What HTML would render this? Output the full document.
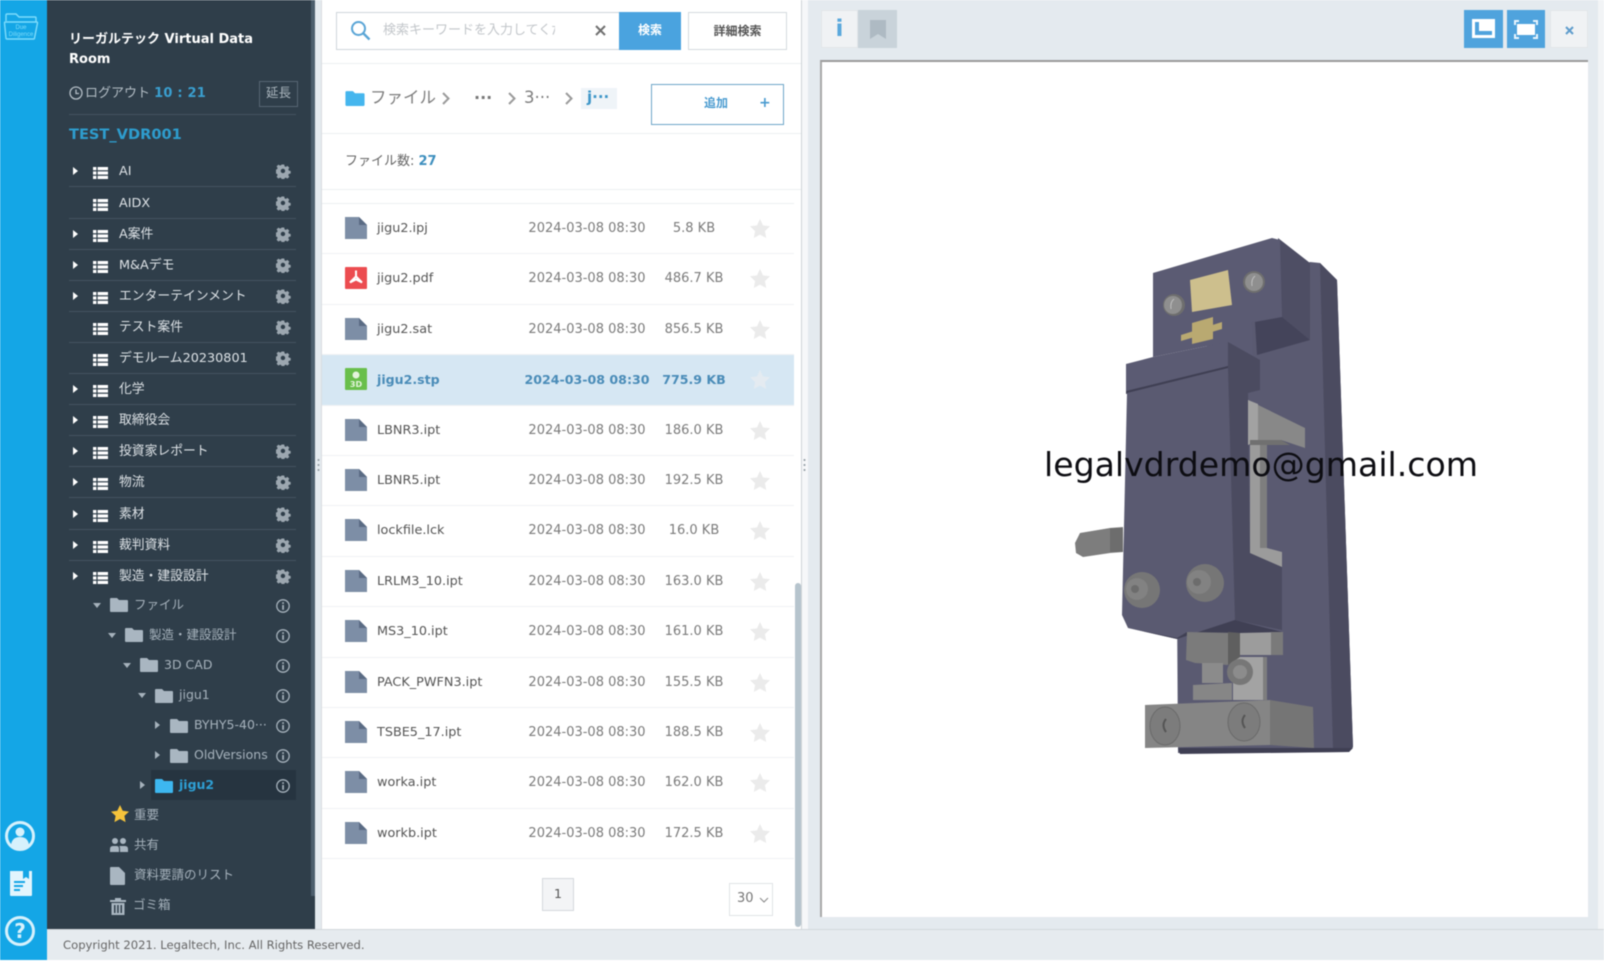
<!DOCTYPE html>
<html lang="ja"><head><meta charset="utf-8"><title>VDR</title>
<style>
*{box-sizing:border-box}
html,body{margin:0;padding:0;width:1604px;height:965px;overflow:hidden;background:#fff}
body{font-family:"DejaVu Sans","Noto Sans CJK JP",sans-serif;font-size:13px;position:relative;color:#555;filter:blur(.4px)}
.a{position:absolute}
#rail{left:0;top:0;width:47px;height:960px;background:#14a6e6}
#side{left:47px;top:0;width:268px;height:929px;background:#2f3e4a}
#sb{left:311px;top:0;width:4px;height:896px;background:#4c5e6d}
#foot{left:47px;top:929px;width:1557px;height:31px;background:#e6ebef;border-top:1px solid #d3d8dc;color:#666;font-size:11.6px;line-height:30px;padding-left:16px}
#mid{left:321px;top:0;width:481px;height:929px;background:#fff;border-left:1px solid #d9dde0;border-right:1px solid #cfd4d8}
#split1{left:315px;top:0;width:6px;height:929px;background:#e4eaef}
#split2{left:802px;top:0;width:6px;height:929px;background:#f6f7f9}
#right{left:808px;top:0;width:790px;height:929px;background:#e4eaef}
#edge{left:1598px;top:0;width:6px;height:929px;background:#f2f4f6}
.r{position:absolute;left:69px;width:227px;height:31.1px;border-bottom:1px solid #435360;color:#dde2e6;line-height:29px;font-size:12.8px;white-space:nowrap}
.r.n{border-bottom:0}
.r span{position:absolute;left:50px;top:1px}
.r .ar{position:absolute;left:4px;top:11px;width:0;height:0;border-left:5px solid #fff;border-top:4.5px solid transparent;border-bottom:4.5px solid transparent}
.r svg{position:absolute}
.r svg.l{left:24px;top:11px}
.r svg.g{left:207px;top:8px}
.t{position:absolute;height:30px;line-height:28px;color:#a6b2bc;font-size:12.5px;white-space:nowrap}
.da{position:absolute;width:0;height:0;border-top:5px solid #a6b2bc;border-left:4.5px solid transparent;border-right:4.5px solid transparent}
.ra{position:absolute;width:0;height:0;border-left:5px solid #a6b2bc;border-top:4.5px solid transparent;border-bottom:4.5px solid transparent}
.f{position:absolute;left:1px;width:472px;height:50.4px;border-bottom:1px solid #f0f2f4;line-height:49px;color:#555;font-size:13px}
.f .n{position:absolute;left:55px;color:#555;font-size:12.8px}
.f .d{position:absolute;left:200px;width:130px;text-align:center;color:#7b7b7b;white-space:nowrap}
.f .s{position:absolute;left:327px;width:90px;text-align:center;color:#7b7b7b;white-space:nowrap}
.f svg{position:absolute}
.f svg.i{left:23px;top:13px}
.f svg.st{left:428px;top:15px}
.f.sel{background:#d6e7f3}
.f.sel .n,.f.sel .d,.f.sel .s{color:#4a8cb8;font-weight:bold;font-size:12.6px}
.h{position:absolute;height:1px;background:#eceff1}
</style></head><body>
<svg width="0" height="0" style="position:absolute"><defs>
<g id="list" fill="#fff"><rect x="0" y="0" width="3.4" height="3.2"/><rect x="4.6" y="0" width="10.4" height="3.2"/><rect x="0" y="4.4" width="3.4" height="3.2"/><rect x="4.6" y="4.4" width="10.4" height="3.2"/><rect x="0" y="8.8" width="3.4" height="3.2"/><rect x="4.6" y="8.8" width="10.4" height="3.2"/></g>
<path id="gear" fill="#9ca7b0" fill-rule="evenodd" d="M5.6 0h2.8l.4 2 1.4.6 1.7-1.1 2 2-1.1 1.7.6 1.4 2 .4v2.8l-2 .4-.6 1.400 1.100 1.700-2 2-1.700-1.100-1.400.6-.4 2H5.6l-.4-2-1.400-.6-1.700 1.100-2-2 1.100-1.700-.6-1.400-2-.4V5.6l2-.4.6-1.400L.1 2.100l2-2 1.700 1.100 1.400-.6zM7 4.600a2.400 2.400 0 1 0 0 4.800 2.400 2.400 0 0 0 0-4.800z" transform="translate(.5 .5) scale(.92)"/>
<path id="fold" d="M0 2q0-1 1-1h6l2 2h8q1 0 1 1v10q0 1-1 1H1q-1 0-1-1z"/>
<g id="info"><circle cx="7" cy="7" r="6.2" fill="none" stroke="#a6b2bc" stroke-width="1.3"/><rect x="6.2" y="6" width="1.7" height="4.8" fill="#a6b2bc"/><rect x="6.2" y="3.2" width="1.7" height="1.7" fill="#a6b2bc"/></g>
<g id="file"><path d="M0 0h14l8 8v14H0z"/><path d="M14 0l8 8h-8z" fill="#5a6b84"/></g>
<path id="star" d="M10 0l3 6.400 7 .9-5.100 4.800 1.300 6.900L10 15.600 3.800 19l1.300-6.900L0 7.300l7-.9z"/>
</defs></svg>

<div class="a" id="rail"></div>
<svg class="a" style="left:3px;top:12px" width="36" height="29" viewBox="0 0 36 29" fill="none" stroke="#7fdcfb" stroke-width="1.4"><path d="M3 9V3q0-1 1-1h9l3 3h16q1 0 1 1v4"/><path d="M1.500 11q0-1 1-1h31q1 0 1 1l-3 15q0 1-1 1H4q-1 0-1-1z"/><text x="18" y="17" font-size="6" fill="#7fdcfb" stroke="none" text-anchor="middle" font-family="Liberation Sans">Due</text><text x="18" y="24" font-size="6" fill="#7fdcfb" stroke="none" text-anchor="middle" font-family="Liberation Sans">Diligence</text></svg>
<svg class="a" style="left:4px;top:820px" width="32" height="32" viewBox="0 0 32 32"><circle cx="16" cy="16" r="13.500" fill="none" stroke="#d6f1fc" stroke-width="3"/><circle cx="16" cy="12" r="4.500" fill="#d6f1fc"/><path d="M7 25q1-8 9-8t9 8q-4 4-9 4t-9-4z" fill="#d6f1fc"/></svg>
<svg class="a" style="left:9px;top:869px" width="24" height="28" viewBox="0 0 24 28"><path d="M1 2h13v8l3-2 3 2V2h3v24q0 1-1 1H2q-1 0-1-1z" fill="#e2f5fd"/><rect x="5" y="12" width="11" height="2" fill="#14a6e6"/><rect x="5" y="16" width="9" height="2" fill="#14a6e6"/><rect x="5" y="20" width="6" height="2" fill="#14a6e6"/></svg>
<svg class="a" style="left:4px;top:915px" width="32" height="32" viewBox="0 0 32 32"><circle cx="16" cy="16" r="13.500" fill="none" stroke="#d6f1fc" stroke-width="3"/><text x="16" y="23" font-size="20" font-weight="bold" fill="#d6f1fc" text-anchor="middle" font-family="DejaVu Sans">?</text></svg>

<div class="a" id="side"></div><div class="a" id="sb"></div>
<div class="a" style="left:69px;top:30px;width:230px;color:#fff;font-weight:bold;font-size:13px;line-height:20px">リーガルテック Virtual Data<br>Room</div>
<svg class="a" style="left:69px;top:86px" width="14" height="14" viewBox="0 0 14 14" fill="none" stroke="#b4bec6" stroke-width="1.300"><circle cx="7" cy="7" r="6"/><path d="M7 3.500V7.500H10"/></svg>
<div class="a" style="left:85px;top:85px;color:#b4bec6;font-size:13px;line-height:18px">ログアウト <b style="color:#3a9fd0;letter-spacing:.2px">10 : 21</b></div>
<div class="a" style="left:259px;top:81px;width:39px;height:26px;border:1px solid #566673;color:#aab5bd;font-size:12.500px;line-height:22px;text-align:center">延長</div>
<div class="a" style="left:69px;top:114px;width:227px;height:1px;background:#435360"></div>
<div class="a" style="left:69px;top:125px;color:#2e9dce;font-weight:bold;font-size:14.600px;line-height:20px">TEST_VDR001</div>

<div class="r" style="top:156.4px"><i class="ar"></i><svg class="l" width="15" height="12"><use href="#list"/></svg><span>AI</span><svg class="g" width="15" height="15"><use href="#gear"/></svg></div>
<div class="r" style="top:187.5px"><svg class="l" width="15" height="12"><use href="#list"/></svg><span>AIDX</span><svg class="g" width="15" height="15"><use href="#gear"/></svg></div>
<div class="r" style="top:218.6px"><i class="ar"></i><svg class="l" width="15" height="12"><use href="#list"/></svg><span>A案件</span><svg class="g" width="15" height="15"><use href="#gear"/></svg></div>
<div class="r" style="top:249.7px"><i class="ar"></i><svg class="l" width="15" height="12"><use href="#list"/></svg><span>M&amp;Aデモ</span><svg class="g" width="15" height="15"><use href="#gear"/></svg></div>
<div class="r" style="top:280.8px"><i class="ar"></i><svg class="l" width="15" height="12"><use href="#list"/></svg><span>エンターテインメント</span><svg class="g" width="15" height="15"><use href="#gear"/></svg></div>
<div class="r" style="top:311.9px"><svg class="l" width="15" height="12"><use href="#list"/></svg><span>テスト案件</span><svg class="g" width="15" height="15"><use href="#gear"/></svg></div>
<div class="r" style="top:343px"><svg class="l" width="15" height="12"><use href="#list"/></svg><span>デモルーム20230801</span><svg class="g" width="15" height="15"><use href="#gear"/></svg></div>
<div class="r" style="top:374.1px"><i class="ar"></i><svg class="l" width="15" height="12"><use href="#list"/></svg><span>化学</span></div>
<div class="r" style="top:405.2px"><i class="ar"></i><svg class="l" width="15" height="12"><use href="#list"/></svg><span>取締役会</span></div>
<div class="r" style="top:436.3px"><i class="ar"></i><svg class="l" width="15" height="12"><use href="#list"/></svg><span>投資家レポート</span><svg class="g" width="15" height="15"><use href="#gear"/></svg></div>
<div class="r" style="top:467.4px"><i class="ar"></i><svg class="l" width="15" height="12"><use href="#list"/></svg><span>物流</span><svg class="g" width="15" height="15"><use href="#gear"/></svg></div>
<div class="r" style="top:498.5px"><i class="ar"></i><svg class="l" width="15" height="12"><use href="#list"/></svg><span>素材</span><svg class="g" width="15" height="15"><use href="#gear"/></svg></div>
<div class="r" style="top:529.6px"><i class="ar"></i><svg class="l" width="15" height="12"><use href="#list"/></svg><span>裁判資料</span><svg class="g" width="15" height="15"><use href="#gear"/></svg></div>
<div class="r n" style="top:560.7px"><i class="ar"></i><svg class="l" width="15" height="12"><use href="#list"/></svg><span>製造・建設設計</span><svg class="g" width="15" height="15"><use href="#gear"/></svg></div>

<div class="a" style="left:151px;top:770px;width:145px;height:30px;background:#263440"></div>

<i class="da" style="left:93px;top:603px"></i><svg class="a" style="left:110px;top:597px" width="18" height="16"><use href="#fold" fill="#a9b6c1"/></svg><div class="t" style="left:134px;top:591px">ファイル</div>
<i class="da" style="left:108px;top:633px"></i><svg class="a" style="left:125px;top:627px" width="18" height="16"><use href="#fold" fill="#a9b6c1"/></svg><div class="t" style="left:149px;top:621px">製造・建設設計</div>
<i class="da" style="left:123px;top:663px"></i><svg class="a" style="left:140px;top:657px" width="18" height="16"><use href="#fold" fill="#a9b6c1"/></svg><div class="t" style="left:164px;top:651px">3D CAD</div>
<i class="da" style="left:138px;top:693px"></i><svg class="a" style="left:155px;top:688px" width="18" height="16"><use href="#fold" fill="#a9b6c1"/></svg><div class="t" style="left:179px;top:681px">jigu1</div>
<i class="ra" style="left:155px;top:721px"></i><svg class="a" style="left:170px;top:718px" width="18" height="16"><use href="#fold" fill="#a9b6c1"/></svg><div class="t" style="left:194px;top:711px">BYHY5-40···</div>
<i class="ra" style="left:155px;top:751px"></i><svg class="a" style="left:170px;top:748px" width="18" height="16"><use href="#fold" fill="#a9b6c1"/></svg><div class="t" style="left:194px;top:741px">OldVersions</div>
<i class="ra" style="left:140px;top:781px"></i><svg class="a" style="left:155px;top:778px" width="18" height="16"><use href="#fold" fill="#3db7f0"/></svg><div class="t" style="left:179px;top:771px;color:#2e9fd4;font-weight:bold">jigu2</div>
<svg class="a" style="left:276px;top:599px" width="14" height="14"><use href="#info"/></svg>
<svg class="a" style="left:276px;top:629px" width="14" height="14"><use href="#info"/></svg>
<svg class="a" style="left:276px;top:659px" width="14" height="14"><use href="#info"/></svg>
<svg class="a" style="left:276px;top:689px" width="14" height="14"><use href="#info"/></svg>
<svg class="a" style="left:276px;top:719px" width="14" height="14"><use href="#info"/></svg>
<svg class="a" style="left:276px;top:749px" width="14" height="14"><use href="#info"/></svg>
<svg class="a" style="left:276px;top:779px" width="14" height="14"><use href="#info"/></svg>

<svg class="a" style="left:111px;top:805px" width="18" height="18" viewBox="0 0 20 20"><use href="#star" fill="#f5c33b"/></svg><div class="t" style="left:134px;top:801px">重要</div>
<svg class="a" style="left:110px;top:837px" width="18" height="16" viewBox="0 0 18 16" fill="#a9b6c1"><circle cx="5" cy="4" r="3"/><circle cx="13" cy="4" r="3"/><path d="M0 15v-3q0-3 3-3h4q2 0 2 3v3zM10 15v-3q0-3-1-3h6q3 0 3 3v3z"/></svg><div class="t" style="left:134px;top:831px">共有</div>
<svg class="a" style="left:110px;top:867px" width="15" height="18" viewBox="0 0 15 18"><path d="M0 1q0-1 1-1h8l6 6v11q0 1-1 1H1q-1 0-1-1z" fill="#a9b6c1"/></svg><div class="t" style="left:134px;top:861px">資料要請のリスト</div>
<svg class="a" style="left:110px;top:898px" width="16" height="17" viewBox="0 0 16 17" fill="#a9b6c1"><path d="M0 2h5V0h6v2h5v2H0zM1.500 5h13v12h-13zM4 7v8h1.500V7zM7.200 7v8h1.500V7zM10.500 7v8H12V7z" fill-rule="evenodd"/></svg><div class="t" style="left:133px;top:891px">ゴミ箱</div>

<div class="a" id="split1"></div>
<div class="a" id="mid"></div>
<div class="a" id="split2"></div>
<div class="a" id="right"></div>
<div class="a" id="edge"></div>
<svg class="a" style="left:317px;top:458px" width="3" height="14" fill="#8d989f"><circle cx="1.500" cy="2" r="1"/><circle cx="1.500" cy="7" r="1"/><circle cx="1.500" cy="12" r="1"/></svg>
<svg class="a" style="left:803px;top:458px" width="3" height="14" fill="#8d989f"><circle cx="1.500" cy="2" r="1"/><circle cx="1.500" cy="7" r="1"/><circle cx="1.500" cy="12" r="1"/></svg>

<!-- search -->
<div class="a" style="left:336px;top:12px;width:284px;height:38px;background:#fff;border:1px solid #cfd6db"></div>
<svg class="a" style="left:350px;top:20px" width="21" height="21" viewBox="0 0 21 21" fill="none" stroke="#5aa5d6" stroke-width="2"><circle cx="8.500" cy="8.500" r="6.500"/><path d="M13 13l6.500 6.500" stroke-width="2.400"/></svg>
<div class="a" style="left:383px;top:21px;width:172px;overflow:hidden;white-space:nowrap;color:#c2c6ca;font-size:13px;line-height:20px">検索キーワードを入力してください</div>
<svg class="a" style="left:595px;top:25px" width="11" height="11" viewBox="0 0 11 11" stroke="#707070" stroke-width="2"><path d="M1 1l9 9M10 1l-9 9"/></svg>
<div class="a" style="left:619px;top:12px;width:62px;height:38px;background:#4aa3df;color:#fff;font-weight:bold;font-size:12px;line-height:36px;text-align:center">検索</div>
<div class="a" style="left:688px;top:12px;width:99px;height:38px;background:#fff;border:1px solid #d5dade;color:#555;font-weight:bold;font-size:12px;line-height:36px;text-align:center">詳細検索</div>
<div class="h" style="left:322px;top:63px;width:479px"></div>
<!-- breadcrumb -->
<svg class="a" style="left:345px;top:90px" width="20" height="17" viewBox="0 0 18 16"><use href="#fold" fill="#45b6ee"/></svg>
<div class="a" style="left:370px;top:86px;color:#7d7d7d;font-size:16.500px;line-height:24px">ファイル</div>
<svg class="a" style="left:441px;top:91px" width="10" height="15" fill="none" stroke="#9a9a9a" stroke-width="2"><path d="M2 2l5.500 5.500L2 13"/></svg>
<div class="a" style="left:474px;top:86px;color:#777;font-size:16px;line-height:24px;font-weight:bold">···</div>
<svg class="a" style="left:507px;top:91px" width="10" height="15" fill="none" stroke="#9a9a9a" stroke-width="2"><path d="M2 2l5.500 5.500L2 13"/></svg>
<div class="a" style="left:524px;top:86px;color:#7d7d7d;font-size:16.500px;line-height:24px">3···</div>
<svg class="a" style="left:564px;top:91px" width="10" height="15" fill="none" stroke="#9a9a9a" stroke-width="2"><path d="M2 2l5.500 5.500L2 13"/></svg>
<div class="a" style="left:581px;top:88px;width:36px;height:21px;background:#eff4f8;color:#3e96c8;font-weight:bold;font-size:15px;line-height:19px;padding-left:6px">j···</div>
<div class="a" style="left:651px;top:84px;width:133px;height:41px;background:#fff;border:1px solid #6ea6c8;color:#4a9bd0;font-size:12px;font-weight:bold;line-height:36px"><span class="a" style="left:52px">追加</span><span class="a" style="left:107px;font-size:14px">+</span></div>
<div class="h" style="left:322px;top:133px;width:479px"></div>
<div class="a" style="left:345px;top:152px;color:#666;font-size:13px;line-height:20px">ファイル数: <b style="color:#3e8fbe">27</b></div>
<div class="h" style="left:322px;top:189px;width:479px"></div>
<div class="h" style="left:322px;top:203px;width:472px"></div>

<!-- file list -->
<div class="a" style="left:321px;top:204px;width:473px;height:660px">
<div class="f" style="top:0"><svg class="i" width="22" height="22"><use href="#file" fill="#7d8ea6"/></svg><span class="n">jigu2.ipj</span><span class="d">2024-03-08 08:30</span><span class="s">5.8 KB</span><svg class="st" width="20" height="20"><use href="#star" fill="#ebebeb"/></svg></div>
<div class="f" style="top:50.4px"><svg class="i" width="22" height="22"><rect width="22" height="22" rx="1" fill="#ec4c50"/><path d="M11 3.500v6L5 15.500l6-3 6 3-6-6" fill="none" stroke="#fff" stroke-width="2"/></svg><span class="n">jigu2.pdf</span><span class="d">2024-03-08 08:30</span><span class="s">486.7 KB</span><svg class="st" width="20" height="20"><use href="#star" fill="#ebebeb"/></svg></div>
<div class="f" style="top:100.8px"><svg class="i" width="22" height="22"><use href="#file" fill="#7d8ea6"/></svg><span class="n">jigu2.sat</span><span class="d">2024-03-08 08:30</span><span class="s">856.5 KB</span><svg class="st" width="20" height="20"><use href="#star" fill="#ebebeb"/></svg></div>
<div class="f sel" style="top:151.2px"><svg class="i" width="22" height="22"><rect width="22" height="22" rx="1" fill="#69bf4b"/><circle cx="11" cy="7" r="3.500" fill="#e4f4dc"/><text x="11" y="19" font-size="8" font-weight="bold" fill="#e4f4dc" text-anchor="middle">3D</text></svg><span class="n">jigu2.stp</span><span class="d">2024-03-08 08:30</span><span class="s">775.9 KB</span><svg class="st" width="20" height="20"><use href="#star" fill="#e4ebf1"/></svg></div>
<div class="f" style="top:201.6px"><svg class="i" width="22" height="22"><use href="#file" fill="#7d8ea6"/></svg><span class="n">LBNR3.ipt</span><span class="d">2024-03-08 08:30</span><span class="s">186.0 KB</span><svg class="st" width="20" height="20"><use href="#star" fill="#ebebeb"/></svg></div>
<div class="f" style="top:252px"><svg class="i" width="22" height="22"><use href="#file" fill="#7d8ea6"/></svg><span class="n">LBNR5.ipt</span><span class="d">2024-03-08 08:30</span><span class="s">192.5 KB</span><svg class="st" width="20" height="20"><use href="#star" fill="#ebebeb"/></svg></div>
<div class="f" style="top:302.4px"><svg class="i" width="22" height="22"><use href="#file" fill="#7d8ea6"/></svg><span class="n">lockfile.lck</span><span class="d">2024-03-08 08:30</span><span class="s">16.0 KB</span><svg class="st" width="20" height="20"><use href="#star" fill="#ebebeb"/></svg></div>
<div class="f" style="top:352.8px"><svg class="i" width="22" height="22"><use href="#file" fill="#7d8ea6"/></svg><span class="n">LRLM3_10.ipt</span><span class="d">2024-03-08 08:30</span><span class="s">163.0 KB</span><svg class="st" width="20" height="20"><use href="#star" fill="#ebebeb"/></svg></div>
<div class="f" style="top:403.2px"><svg class="i" width="22" height="22"><use href="#file" fill="#7d8ea6"/></svg><span class="n">MS3_10.ipt</span><span class="d">2024-03-08 08:30</span><span class="s">161.0 KB</span><svg class="st" width="20" height="20"><use href="#star" fill="#ebebeb"/></svg></div>
<div class="f" style="top:453.6px"><svg class="i" width="22" height="22"><use href="#file" fill="#7d8ea6"/></svg><span class="n">PACK_PWFN3.ipt</span><span class="d">2024-03-08 08:30</span><span class="s">155.5 KB</span><svg class="st" width="20" height="20"><use href="#star" fill="#ebebeb"/></svg></div>
<div class="f" style="top:504px"><svg class="i" width="22" height="22"><use href="#file" fill="#7d8ea6"/></svg><span class="n">TSBE5_17.ipt</span><span class="d">2024-03-08 08:30</span><span class="s">188.5 KB</span><svg class="st" width="20" height="20"><use href="#star" fill="#ebebeb"/></svg></div>
<div class="f" style="top:554.4px"><svg class="i" width="22" height="22"><use href="#file" fill="#7d8ea6"/></svg><span class="n">worka.ipt</span><span class="d">2024-03-08 08:30</span><span class="s">162.0 KB</span><svg class="st" width="20" height="20"><use href="#star" fill="#ebebeb"/></svg></div>
<div class="f" style="top:604.8px"><svg class="i" width="22" height="22"><use href="#file" fill="#7d8ea6"/></svg><span class="n">workb.ipt</span><span class="d">2024-03-08 08:30</span><span class="s">172.5 KB</span><svg class="st" width="20" height="20"><use href="#star" fill="#ebebeb"/></svg></div>
</div>
<div class="a" style="left:795px;top:583px;width:6px;height:344px;background:#b6c4cd;border-radius:3px"></div>
<div class="a" style="left:542px;top:878px;width:32px;height:33px;background:#f3f4f6;border:1px solid #d5d9dd;color:#555;font-size:12.500px;line-height:29px;text-align:center">1</div>
<div class="a" style="left:729px;top:883px;width:44px;height:33px;background:#fff;border:1px solid #e0e3e6;color:#777;font-size:13px;line-height:30px;padding-left:7px">30<svg class="a" style="left:29px;top:13px" width="10" height="6" fill="none" stroke="#888" stroke-width="1"><path d="M1 1l4 4 4-4"/></svg></div>

<!-- viewer toolbar -->
<div class="a" style="left:821px;top:10px;width:37px;height:38px;background:#f0f2f4;border:1px solid #e2e6e9;color:#5aa8dc;font-weight:bold;font-size:23px;line-height:36px;text-align:center">i</div>
<div class="a" style="left:858px;top:10px;width:39px;height:38px;background:#c9d3da"></div>
<svg class="a" style="left:870px;top:20px" width="16" height="19"><path d="M0 0h16v19l-8-5-8 5z" fill="#aebac3"/></svg>
<div class="a" style="left:1464px;top:10px;width:39px;height:38px;background:#4fa3dd"></div>
<svg class="a" style="left:1472px;top:19px" width="23" height="19"><rect width="23" height="19" fill="#fff"/><path d="M3 3h4v9h13v4H3z" fill="#4fa3dd"/></svg>
<div class="a" style="left:1507px;top:10px;width:38px;height:38px;background:#4fa3dd"></div>
<svg class="a" style="left:1514px;top:20px" width="24" height="19" fill="none" stroke="#e8f4fc" stroke-width="2"><path d="M1 5V1h4M19 1h4v4M1 14v4h4M19 18h4v-4"/><rect x="3" y="4" width="18" height="11" fill="#fff" stroke="none"/></svg>
<div class="a" style="left:1550px;top:10px;width:38px;height:38px;background:#f0f2f4;border:1px solid #e2e6e9"></div>
<svg class="a" style="left:1565px;top:26px" width="9" height="9" stroke="#5f9ccc" stroke-width="2"><path d="M1 1l7 7M8 1l-7 7"/></svg>

<!-- viewer -->
<div class="a" style="left:820px;top:60px;width:768px;height:857px;background:#fff;border-top:2px solid #9a9a9a;border-left:2px solid #a8a8a8"></div>
<svg class="a" style="left:1040px;top:220px" width="480" height="560" viewBox="1040 220 480 560">
<!-- back plate -->
<path d="M1310 262L1320 263L1337 280L1353 747L1349 752L1178 753L1177 600L1130 500L1230 300Z" fill="#5a5a71"/>
<path d="M1320 263L1337 280L1353 747L1349 751L1333 750Z" fill="#4b4b60"/>
<path d="M1278 238L1310 263L1310 340L1282 317Z" fill="#4e4e64"/>
<!-- upper block -->
<path d="M1153 273L1272 238L1280 240L1282 317L1252 322L1253 357L1227 342L1153 357Z" fill="#5b5b73"/>
<path d="M1255 322L1282 317L1310 340L1257 355Z" fill="#44445a"/>
<path d="M1190 280L1228 270L1232 305L1192 312Z" fill="#cdbf8d"/>
<path d="M1181 335L1222 322V329L1181 341Z" fill="#b9a971"/>
<path d="M1192 323L1213 317V339L1192 344Z" fill="#b9a971"/>
<circle cx="1174" cy="305" r="11" fill="#6e6e6e"/><circle cx="1173" cy="305" r="9" fill="#8f8f8f"/><path d="M1174 299q-4 3-3 10" stroke="#c0c0c0" fill="none"/>
<circle cx="1254" cy="282" r="11" fill="#6e6e6e"/><circle cx="1254" cy="282" r="9" fill="#8f8f8f"/><path d="M1255 276q-4 3-3 10" stroke="#c0c0c0" fill="none"/>
<!-- main block -->
<path d="M1126 364L1153 357L1227 342L1228 367L1126 392Z" fill="#5b5b73"/>
<path d="M1126 391L1228 366V369L1126 394Z" fill="#3f3f53"/>
<path d="M1127 393L1228 368L1235 620L1177 639L1128 628L1122 615Z" fill="#5a5a71"/>
<path d="M1228 342L1260 360L1260 390L1248 393L1250 553L1282 567L1282 630L1235 620L1228 368Z" fill="#4b4b60"/>
<path d="M1128 628L1177 639L1235 620L1282 632L1238 635L1187 632L1177 638Z" fill="#404054"/>
<!-- grey slot -->
<path d="M1248 400L1305 428L1305 448L1281 440L1258 440L1248 445Z" fill="#888"/>
<path d="M1248 400L1258 404L1258 440L1248 445Z" fill="#a2a2a2"/>
<path d="M1250 440L1281 440L1290 445H1250Z" fill="#707070"/>
<path d="M1250 445L1262 445L1262 540L1267 548L1282 552L1282 567L1250 553Z" fill="#9b9b9b"/>
<path d="M1260 445H1267V548H1260Z" fill="#7e7e7e"/>
<!-- pin -->
<path d="M1075 543L1080 533L1110 528L1123 527L1123 552L1110 553L1083 557L1076 553Z" fill="#7d7d7d"/>
<path d="M1110 528H1123V552H1110Z" fill="#6d6d6d"/>
<!-- bolts -->
<circle cx="1142" cy="590" r="18" fill="#767676"/><circle cx="1137" cy="589" r="11" fill="#828282"/><circle cx="1135" cy="589" r="4" fill="#6c6c6c"/>
<circle cx="1205" cy="583" r="19" fill="#767676"/><circle cx="1199" cy="582" r="12" fill="#828282"/><circle cx="1197" cy="582" r="4" fill="#6c6c6c"/>
<!-- nut -->
<path d="M1233 657H1263V700H1233Z" fill="#a3a3a3"/>
<path d="M1263 657H1267V700H1263Z" fill="#7e7e7e"/>
<path d="M1240 633L1283 632V655L1240 655Z" fill="#9c9c9c"/>
<path d="M1271 632H1283V655H1271Z" fill="#7a7a7a"/>
<path d="M1187 632L1240 633L1240 657L1228 665L1195 663L1186 660Z" fill="#7b7b7b"/>
<path d="M1228 632L1240 633L1240 657L1228 665Z" fill="#5f5f5f"/>
<path d="M1202 663H1223V683H1202Z" fill="#8b8b8b"/>
<circle cx="1240" cy="672" r="13" fill="#777"/><circle cx="1240" cy="672" r="7" fill="#8c8c8c"/>
<!-- base -->
<path d="M1178 748L1353 748L1349 752L1180 754Z" fill="#3f3f53"/>
<path d="M1193 700V685L1232 683V700Z" fill="#868686"/>
<path d="M1145 705L1270 700V745L1145 748Z" fill="#858585"/>
<path d="M1270 700L1313 707L1314 748L1270 745Z" fill="#757575"/>
<ellipse cx="1165" cy="726" rx="15" ry="19" fill="#7c7c7c" stroke="#6a6a6a"/><path d="M1166 719q-5 6 0 13" fill="none" stroke="#555" stroke-width="2"/>
<ellipse cx="1244" cy="722" rx="16" ry="19" fill="#7c7c7c" stroke="#6a6a6a"/><path d="M1245 715q-5 6 0 13" fill="none" stroke="#555" stroke-width="2"/>
<text x="1044" y="476" font-family="DejaVu Sans" font-size="33" fill="#0d0d12" textLength="434" lengthAdjust="spacingAndGlyphs">legalvdrdemo@gmail.com</text>
</svg>

<div class="a" id="foot">Copyright 2021. Legaltech, Inc. All Rights Reserved.</div>
</body></html>
